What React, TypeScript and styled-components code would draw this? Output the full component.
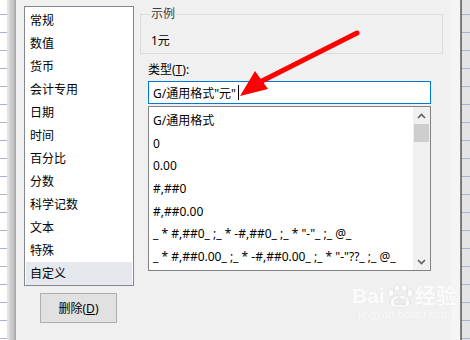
import styled, { createGlobalStyle } from 'styled-components';

const GlobalStyle = createGlobalStyle`
  html, body {
    margin: 0;
    padding: 0;
    width: 470px;
    height: 340px;
    overflow: hidden;
    background: #f0f0f0;
  }
  body {
    font-family: "Noto Sans", "Noto Sans CJK SC", sans-serif;
    font-size: 12px;
    color: #000;
  }
`;

const gridLines = `repeating-linear-gradient(
  to bottom,
  transparent 0px,
  transparent 13px,
  #a9b3d3 13px,
  #a9b3d3 14px,
  transparent 14px,
  transparent 18px
)`;

const Screen = styled.div`
  position: relative;
  display: flex;
  width: 470px;
  height: 340px;
`;

const Sheet = styled.div<{ $tone: string }>`
  width: ${(p) => (p.$tone === 'left' ? '7px' : '8px')};
  flex-shrink: 0;
  background: ${gridLines}, ${(p) => (p.$tone === 'left' ? '#ffffff' : '#e4e4e4')};
  background-position: 0 1px;
`;

const Shadow = styled.div`
  width: 9px;
  flex-shrink: 0;
  background: linear-gradient(to right, #e2e2e2 0, #e2e2e2 2px, #cdcdcd 3px, #c4c4c4 7px, #9c9c9c 8px, #b8b8b8 9px);
`;

const RightEdge = styled.div`
  width: 11px;
  flex-shrink: 0;
  background: linear-gradient(to right, #f5f5f5 0, #f5f5f5 9px, #8a8a8a 9px, #6e6e6e 11px);
`;

const Dialog = styled.div`
  flex: 1;
  display: flex;
  gap: 6px;
  padding: 6px 0 0 8px;
  background: #f0f0f0;
`;

const LeftCol = styled.div`
  display: flex;
  flex-direction: column;
  width: 110px;
`;

const CategoryList = styled.ul`
  margin: 0;
  padding: 2px 1px;
  list-style: none;
  height: 280px;
  box-sizing: border-box;
  background: #fff;
  border: 1px solid #828790;
`;

const Category = styled.li<{ $active?: boolean }>`
  height: 23px;
  line-height: 23px;
  padding-left: 4px;
  background: ${(p) => (p.$active ? '#e5e8ec' : 'transparent')};
`;

const DeleteButton = styled.button`
  margin: 7px 0 0 16px;
  width: 77px;
  height: 30px;
  background: #e1e1e1;
  border: 1px solid #adadad;
  font-family: inherit;
  font-size: 12px;
  color: #000;
  padding: 0;
`;

const Key = styled.span`
  text-decoration: underline;
`;

const RightCol = styled.div`
  display: flex;
  flex-direction: column;
  width: 303px;
  padding-top: 1px;
`;

const Group = styled.fieldset`
  margin: 0;
  padding: 10px 10px 0;
  height: 47px;
  box-sizing: border-box;
  border: 1px solid #dcdcdc;
`;

const Legend = styled.legend`
  padding: 0 1px;
  margin-left: -1px;
  color: #3c3c3c;
  line-height: 14px;
`;

const Sample = styled.div`
  line-height: 20px;
`;

const Field = styled.div`
  display: flex;
  flex-direction: column;
  padding-left: 8px;
  width: 283px;
`;

const Label = styled.label`
  margin-top: 7px;
  line-height: 18px;
  height: 20px;
`;

const TypeInput = styled.div`
  display: flex;
  align-items: center;
  height: 23px;
  box-sizing: border-box;
  border: 1px solid #0078d7;
  padding-left: 4px;
  background: #fff;
`;

const Caret = styled.span`
  display: inline-block;
  width: 1px;
  height: 15px;
  margin-left: 2px;
  background: #000;
`;

const FormatBox = styled.div`
  display: flex;
  margin-top: 2px;
  height: 165px;
  box-sizing: border-box;
  border: 1px solid #828282;
  background: #fff;
`;

const FormatList = styled.ul`
  flex: 1;
  margin: 0;
  padding: 3px 0 0 4px;
  list-style: none;
  overflow: hidden;
`;

const Format = styled.li`
  height: 22.7px;
  line-height: 22.7px;
  white-space: pre;
`;

const ScrollBar = styled.div`
  width: 17px;
  display: flex;
  flex-direction: column;
  background: #f0f0f0;
`;

const ArrowBtn = styled.div`
  height: 17px;
  display: flex;
  align-items: center;
  justify-content: center;
`;

const Thumb = styled.div`
  height: 18px;
  margin: 0 1px;
  background: #cdcdcd;
`;

const Track = styled.div`
  flex: 1;
`;

const Watermark = styled.div`
  position: absolute;
  left: 352px;
  top: 284px;
  display: flex;
  flex-direction: column;
  align-items: center;
  color: #fbfbfb;
  text-shadow: 0 0 1px #e4e4e4;
  pointer-events: none;
`;

const WaterLogo = styled.div`
  display: flex;
  align-items: center;
  font-family: "Liberation Sans", "Noto Sans CJK SC", sans-serif;
  font-size: 21px;
  font-weight: bold;
  line-height: 24px;
`;

const WaterSite = styled.div`
  font-family: "Liberation Sans", sans-serif;
  font-size: 11px;
  line-height: 12px;
  letter-spacing: 0.2px;
`;

const Overlay = styled.svg`
  position: absolute;
  left: 0;
  top: 0;
  pointer-events: none;
`;

const categories = ['常规', '数值', '货币', '会计专用', '日期', '时间', '百分比', '分数', '科学记数', '文本', '特殊', '自定义'];

const formats = [
  'G/通用格式',
  '0',
  '0.00',
  '#,##0',
  '#,##0.00',
  '_ * #,##0_ ;_ * -#,##0_ ;_ * "-"_ ;_ @_',
  '_ * #,##0.00_ ;_ * -#,##0.00_ ;_ * "-"??_ ;_ @_',
];

const Chevron = ({ up }: { up?: boolean }) => (
  <svg width="9" height="6" viewBox="0 0 9 6">
    <path d={up ? 'M1 5 L4.5 1.5 L8 5' : 'M1 1 L4.5 4.5 L8 1'} fill="none" stroke="#606060" strokeWidth="1.6" />
  </svg>
);

const App = () => (
  <Screen>
    <GlobalStyle />
    <Sheet $tone="left" />
    <Shadow />
    <Dialog>
      <LeftCol>
        <CategoryList>
          {categories.map((c) => (
            <Category key={c} $active={c === '自定义'}>
              {c}
            </Category>
          ))}
        </CategoryList>
        <DeleteButton>
          删除(<Key>D</Key>)
        </DeleteButton>
      </LeftCol>
      <RightCol>
        <Group>
          <Legend>示例</Legend>
          <Sample>1元</Sample>
        </Group>
        <Field>
          <Label>
            类型(<Key>T</Key>):
          </Label>
          <TypeInput>
            G/通用格式"元"
            <Caret />
          </TypeInput>
          <FormatBox>
            <FormatList>
              {formats.map((f) => (
                <Format key={f}>{f}</Format>
              ))}
            </FormatList>
            <ScrollBar>
              <ArrowBtn>
                <Chevron up />
              </ArrowBtn>
              <Thumb />
              <Track />
              <ArrowBtn>
                <Chevron />
              </ArrowBtn>
            </ScrollBar>
          </FormatBox>
        </Field>
      </RightCol>
    </Dialog>
    <RightEdge />
    <Sheet $tone="right" />
    <Watermark>
      <WaterLogo>
        Bai
        <svg width="30" height="24" viewBox="0 0 30 24">
          <g fill="#fbfbfb" stroke="#e4e4e4" strokeWidth="1">
            <ellipse cx="6" cy="9" rx="3" ry="4" />
            <ellipse cx="12" cy="4" rx="3" ry="3.5" />
            <ellipse cx="19" cy="4" rx="3" ry="3.5" />
            <ellipse cx="25" cy="9" rx="3" ry="4" />
            <path d="M5 20 C5 14 10 11 15 11 C20 11 25 14 25 20 C25 23 22 23.5 15 23.5 C8 23.5 5 23 5 20 Z" />
          </g>
          <text x="15" y="21" textAnchor="middle" fontSize="10" fontWeight="bold" fill="#fbfbfb" stroke="#e4e4e4" strokeWidth="0.5" fontFamily="Liberation Sans, sans-serif">du</text>
        </svg>
        经验
      </WaterLogo>
      <WaterSite>jingyan.baidu.com</WaterSite>
    </Watermark>
    <Overlay width="470" height="340" viewBox="0 0 470 340">
      <line x1="357" y1="33" x2="258" y2="83" stroke="#ff0000" strokeWidth="5" strokeLinecap="round" />
      <polygon points="240,96 255,71 268,89" fill="#ff0000" />
    </Overlay>
  </Screen>
);

export default App;
